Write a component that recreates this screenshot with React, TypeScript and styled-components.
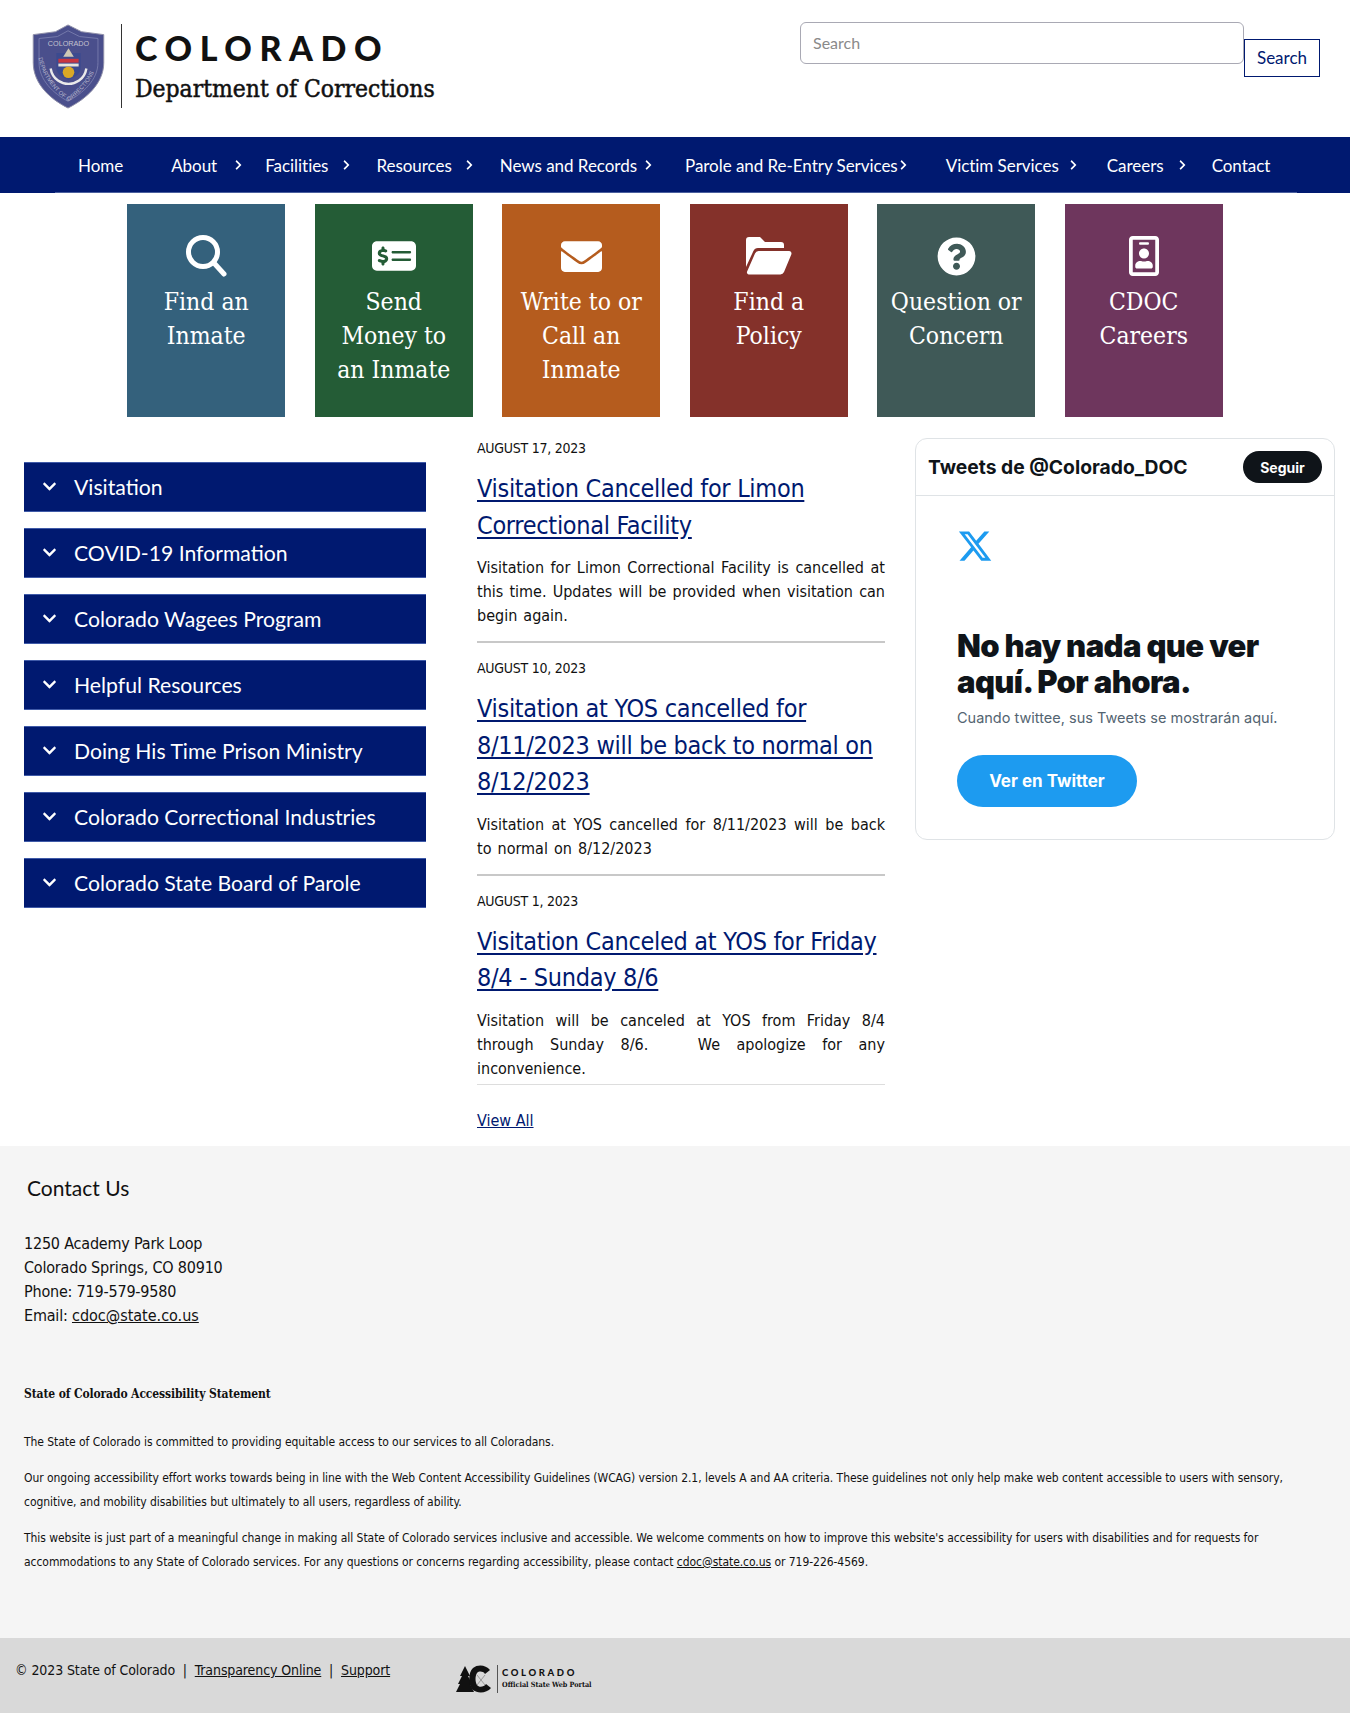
import React from 'react';
import styled, { createGlobalStyle } from 'styled-components';
import { FaChevronDown, FaChevronRight, FaEnvelope, FaQuestionCircle, FaRegIdBadge } from 'react-icons/fa';
import { FaMoneyCheckDollar, FaXTwitter } from 'react-icons/fa6';

const BODY_FONT = `'DejaVu Sans Condensed', 'DejaVu Sans', sans-serif`;
const NAV_FONT = `Lato, 'Open Sans', sans-serif`;
const SLAB_FONT = `'DejaVu Serif Condensed', 'DejaVu Serif', serif`;
const NAVY = '#001970';

const GlobalStyle = createGlobalStyle`
  html, body { margin: 0; padding: 0; background: #fff; }
  body { font-family: ${BODY_FONT}; color: #111; }
  * { box-sizing: border-box; }
`;

const Page = styled.div`
  width: 1350px;
  height: 1713px;
  overflow: hidden;
`;

// Header
const Header = styled.header`
  height: 137px;
  display: flex;
  justify-content: space-between;
  padding: 22px 30px 0 30px;
`;

const Brand = styled.div`
  display: flex;
  align-items: flex-start;
`;

const SealWrap = styled.div`
  display: flex;
  margin-top: 2px;
`;

const Divider = styled.div`
  width: 1px;
  height: 84px;
  background: #333;
  margin: 2px 13px 0 14px;
`;

const BrandText = styled.div`
  display: flex;
  flex-direction: column;
`;

const StateName = styled.div`
  font-family: ${NAV_FONT};
  font-weight: 900;
  font-size: 34px;
  line-height: 40px;
  letter-spacing: 7.6px;
  margin-top: 6px;
  color: #111;
`;

const DeptName = styled.div`
  font-family: ${SLAB_FONT};
  font-weight: 400;
  font-size: 24.4px;
  line-height: 30px;
  margin-top: 6px;
  color: #111;
  -webkit-text-stroke: 0.5px #111;
`;

const SearchForm = styled.form`
  display: flex;
  align-items: flex-start;
`;

const SearchInput = styled.input`
  width: 444px;
  height: 42px;
  border: 1px solid #a9a9b4;
  border-radius: 6px;
  padding: 0 12px 2px;
  font-family: ${NAV_FONT};
  font-size: 16px;
  &::placeholder { color: #8a8a8a; opacity: 1; }
`;

const SearchButton = styled.button`
  width: 76px;
  height: 38px;
  margin-top: 17px;
  background: #fff;
  border: 1px solid ${NAVY};
  color: ${NAVY};
  font-family: ${NAV_FONT};
  font-size: 17px;
  padding: 0 0 2px;
`;

// Nav
const NavBar = styled.nav`
  height: 56px;
  background: ${NAVY};
  display: flex;
  align-items: center;
  gap: 48px;
  padding-left: 78px;
  position: relative;
  &::after {
    content: '';
    position: absolute;
    left: 55px;
    right: 53px;
    bottom: 0;
    height: 1px;
    background: #4a5f9e;
  }
`;

const NavItem = styled.a`
  position: relative;
  color: #fff;
  font-family: ${NAV_FONT};
  font-size: 17px;
  letter-spacing: -0.04px;
  white-space: nowrap;
`;

const NavChevron = styled.span<{ $offset: number }>`
  position: absolute;
  top: 50%;
  left: calc(100% + ${(p) => p.$offset}px);
  transform: translateY(-50%);
  display: flex;
  font-size: 11px;
`;

// Tiles
const Tiles = styled.div`
  display: flex;
  justify-content: center;
  gap: 29.5px;
  padding-top: 11px;
`;

const Tile = styled.a<{ $bg: string }>`
  width: 158px;
  height: 213px;
  background: ${(p) => p.$bg};
  color: #fff;
  display: flex;
  flex-direction: column;
  align-items: center;
  padding-top: 30px;
`;

const TileIcon = styled.div<{ $size: number }>`
  height: 44px;
  display: flex;
  align-items: center;
  justify-content: center;
  font-size: ${(p) => p.$size}px;
`;

const TileLabel = styled.div`
  font-family: ${SLAB_FONT};
  font-size: 24.5px;
  line-height: 34px;
  text-align: center;
  margin-top: 7px;
`;

// Main columns
const Columns = styled.main`
  display: flex;
  align-items: flex-start;
  height: 729px;
`;

const Sidebar = styled.div`
  width: 402px;
  margin: 44.5px 0 0 24px;
  display: flex;
  flex-direction: column;
  gap: 16px;
`;

const AccordionRow = styled.div`
  height: 50px;
  background: ${NAVY};
  border-top: 1px solid #3f5aa8;
  border-bottom: 1px solid #3f5aa8;
  display: flex;
  align-items: center;
  padding-left: 18px;
  gap: 17px;
  color: #fff;
  font-family: ${NAV_FONT};
  font-size: 21.2px;
`;

const RowChevron = styled.span`
  display: flex;
  font-size: 15px;
`;

const NewsColumn = styled.div`
  width: 408px;
  margin: 21px 0 0 51px;
`;

const NewsItem = styled.article<{ $rule?: boolean }>`
  border-bottom: ${(p) => (p.$rule ? '2px solid #c8c8c8' : '1px solid #ddd')};
  padding-bottom: ${(p) => (p.$rule ? '13px' : '3px')};
  margin-bottom: 15px;
`;

const NewsDate = styled.div`
  font-size: 14px;
  line-height: 20px;
  letter-spacing: -0.25px;
  color: #111;
`;

const NewsTitle = styled.a`
  display: block;
  margin-top: 13px;
  font-size: 25px;
  line-height: 36.5px;
  letter-spacing: -0.3px;
  color: ${NAVY};
  text-decoration: underline;
  text-underline-offset: 3px;
`;

const NewsBody = styled.p`
  margin: 12px 0 0;
  font-size: 16px;
  line-height: 24px;
  word-spacing: 1.5px;
  text-align: justify;
  color: #111;
`;

const ViewAll = styled.a`
  display: block;
  margin-top: 24px;
  font-size: 16px;
  line-height: 24px;
  color: ${NAVY};
  text-decoration: underline;
`;

// Twitter embed
const TweetCard = styled.aside`
  width: 420px;
  height: 402px;
  margin: 21px 0 0 30px;
  border: 1px solid #dfe3e6;
  border-radius: 12px;
  font-family: Inter, sans-serif;
`;

const TweetHead = styled.div`
  height: 57px;
  border-bottom: 1px solid #dfe3e6;
  display: flex;
  align-items: center;
  justify-content: space-between;
  padding: 0 12px;
`;

const TweetHeadTitle = styled.div`
  font-size: 19.3px;
  font-weight: 700;
  color: #0f1419;
`;

const FollowButton = styled.div`
  height: 32px;
  width: 79px;
  border-radius: 16px;
  background: #0f1419;
  color: #fff;
  font-size: 14px;
  font-weight: 700;
  display: flex;
  align-items: center;
  justify-content: center;
`;

const TweetBody = styled.div`
  padding: 32px 41px 0;
`;

const XMark = styled.div`
  display: flex;
  font-size: 36px;
  color: #1d9bf0;
`;

const EmptyTitle = styled.div`
  margin-top: 64px;
  font-size: 31px;
  line-height: 36px;
  font-weight: 900;
  color: #0f1419;
  letter-spacing: -0.6px;
`;

const EmptyText = styled.div`
  margin-top: 8px;
  font-size: 14.5px;
  line-height: 20px;
  color: #536471;
`;

const ViewButton = styled.div`
  margin-top: 27px;
  width: 180px;
  height: 52px;
  border-radius: 26px;
  background: #1d9bf0;
  color: #fff;
  font-size: 17px;
  font-weight: 700;
  display: flex;
  align-items: center;
  justify-content: center;
`;

// Footer
const Footer = styled.footer`
  height: 492px;
  background: #f5f5f5;
  padding: 28px 24px 0;
`;

const ContactTitle = styled.div`
  font-family: ${NAV_FONT};
  font-size: 21px;
  line-height: 28px;
  margin-left: 3px;
  color: #111;
`;

const Address = styled.div`
  margin-top: 30px;
  font-size: 16px;
  line-height: 24px;
  letter-spacing: -0.2px;
  a { color: #111; text-decoration: underline; letter-spacing: 0; }
`;

const StatementTitle = styled.div`
  margin-top: 56px;
  font-family: ${SLAB_FONT};
  font-weight: 700;
  font-size: 12px;
  line-height: 20px;
  letter-spacing: -0.12px;
`;

const StatementText = styled.p`
  margin: 12px 0 0;
  font-size: 12px;
  line-height: 24px;
  letter-spacing: -0.05px;
  color: #111;
  a { color: #111; text-decoration: underline; }
  &:first-of-type { margin-top: 26px; }
`;

const BottomBar = styled.div`
  height: 75px;
  background: #d9d9d9;
  display: flex;
  align-items: flex-start;
  padding: 22px 0 0 15px;
`;

const BottomLinks = styled.div`
  font-size: 14px;
  line-height: 20px;
  letter-spacing: -0.1px;
  white-space: pre;
  a { color: #111; text-decoration: underline; }
`;

const PortalLogo = styled.div`
  display: flex;
  align-items: center;
  margin: 4px 0 0 66px;
`;

const PortalDivider = styled.div`
  width: 1px;
  height: 28px;
  background: #555;
  margin: 0 4px 0 3px;
`;

const PortalName = styled.div`
  font-family: ${NAV_FONT};
  font-weight: 900;
  font-size: 9.5px;
  line-height: 12px;
  letter-spacing: 2.6px;
`;

const PortalSub = styled.div`
  font-family: ${SLAB_FONT};
  font-size: 7.2px;
  line-height: 12px;
  font-weight: 700;
`;

const Seal = () => (
  <svg width="77" height="85" viewBox="0 0 77 88">
    <path d="M38 1 L52 8 L75 11 L75 40 C75 62 56 78 38 87 C20 78 2 62 2 40 L2 11 L25 8 Z" fill="#4a4f8c" stroke="#8f8fa8" />
    <path d="M38 7 L50 13 L69 15 L69 40 C69 58 53 72 38 80 C23 72 8 58 8 40 L8 15 L27 13 Z" fill="none" stroke="#7579ab" strokeWidth="1" />
    <defs>
      <path id="sealArc" d="M7 30 C9 54 24 70 38.5 80 C53 70 68 54 70 30" />
    </defs>
    <text x="38.5" y="23" textAnchor="middle" fontSize="7.5" fill="#c4c2cf" fontFamily="Liberation Sans, sans-serif">COLORADO</text>
    <text fontSize="6" fill="#b8b8cc" fontFamily="Liberation Sans, sans-serif">
      <textPath href="#sealArc" startOffset="4%">DEPARTMENT OF CORRECTIONS</textPath>
    </text>
    <path d="M26 30 L51 30 L51 46 C51 52 44 55 38.5 58 C33 55 26 52 26 46 Z" fill="#3b4a8f" />
    <path d="M38.5 25 L44 34 L33 34 Z" fill="#cfc9b5" />
    <rect x="28" y="36" width="21" height="4" fill="#c9353f" />
    <rect x="28" y="41" width="21" height="3" fill="#e8e4da" />
    <circle cx="38.5" cy="50" r="6" fill="#d9a826" />
    <path d="M20 46 C22 58 32 62 38.5 62 C45 62 55 58 57 46" fill="none" stroke="#eaeaea" strokeWidth="2.5" />
  </svg>
);

const SearchGlyph = () => (
  <svg width="42" height="44" viewBox="0 0 42 44" fill="none" stroke="#fff" strokeWidth="5" strokeLinecap="round">
    <circle cx="18" cy="18" r="14.5" />
    <path d="M29 29 L39 40" />
  </svg>
);

const FolderGlyph = () => (
  <svg width="46" height="38" viewBox="0 0 46 38" fill="#fff">
    <path d="M0 3a3 3 0 0 1 3-3h11l5 5h16a3 3 0 0 1 3 3v3H12a5 5 0 0 0-4.6 3L0 30z" />
    <path d="M12.5 14H43a2.5 2.5 0 0 1 2.3 3.4L38 35a4 4 0 0 1-3.6 2.4H3a2 2 0 0 1-1.9-2.8L9 16.5a4 4 0 0 1 3.5-2.5z" />
  </svg>
);

const PortalMark = () => (
  <svg width="38" height="30" viewBox="0 0 38 30">
    <path d="M9 2 L14 12 L12 12 L16 20 L14 20 L18 28 L0 28 L4 20 L2 20 L6 12 L4 12 Z" fill="#111" />
    <path d="M34 6 C30 1 22 0 17 4 C12 8 12 22 17 26 C22 30 31 29 35 24 L30 20 C28 23 23 24 21 21 C19 18 19 12 21 9 C23 7 27 7 29 10 Z" fill="#111" />
    <path d="M21 11 L29 21 M29 11 L21 21" stroke="#999" strokeWidth="1" />
  </svg>
);

const navLinks = [
  { label: 'Home' },
  { label: 'About', offset: 15.5 },
  { label: 'Facilities', offset: 13 },
  { label: 'Resources', offset: 12 },
  { label: 'News and Records', offset: 5.6 },
  { label: 'Parole and Re-Entry Services', offset: 0 },
  { label: 'Victim Services', offset: 9 },
  { label: 'Careers', offset: 13 },
  { label: 'Contact' },
];

const tiles = [
  { bg: '#34617c', size: 44, icon: <SearchGlyph />, label: ['Find an', 'Inmate'] },
  { bg: '#245c36', size: 44, icon: <FaMoneyCheckDollar />, label: ['Send', 'Money to', 'an Inmate'] },
  { bg: '#b55c1e', size: 41, icon: <FaEnvelope />, label: ['Write to or', 'Call an', 'Inmate'] },
  { bg: '#84312a', size: 44, icon: <FolderGlyph />, label: ['Find a', 'Policy'] },
  { bg: '#3f5957', size: 39, icon: <FaQuestionCircle />, label: ['Question or', 'Concern'] },
  { bg: '#6e365d', size: 40, icon: <FaRegIdBadge />, label: ['CDOC', 'Careers'] },
];

const accordions = [
  'Visitation',
  'COVID-19 Information',
  'Colorado Wagees Program',
  'Helpful Resources',
  'Doing His Time Prison Ministry',
  'Colorado Correctional Industries',
  'Colorado State Board of Parole',
];

const news = [
  {
    date: 'AUGUST 17, 2023',
    title: 'Visitation Cancelled for Limon Correctional Facility',
    body: 'Visitation for Limon Correctional Facility is cancelled at this time. Updates will be provided when visitation can begin again.',
    rule: true,
  },
  {
    date: 'AUGUST 10, 2023',
    title: 'Visitation at YOS cancelled for 8/11/2023 will be back to normal on 8/12/2023',
    body: 'Visitation at YOS cancelled for 8/11/2023 will be back to normal on 8/12/2023',
    rule: true,
  },
  {
    date: 'AUGUST 1, 2023',
    title: 'Visitation Canceled at YOS for Friday 8/4 - Sunday 8/6',
    body: 'Visitation will be canceled at YOS from Friday 8/4 through Sunday 8/6.\u00a0 \u00a0We apologize for any inconvenience.',
    rule: false,
  },
];

export default function App(): JSX.Element {
  return (
    <Page>
      <GlobalStyle />
      <Header>
        <Brand>
          <SealWrap>
            <Seal />
          </SealWrap>
          <Divider />
          <BrandText>
            <StateName>COLORADO</StateName>
            <DeptName>Department of Corrections</DeptName>
          </BrandText>
        </Brand>
        <SearchForm>
          <SearchInput placeholder="Search" />
          <SearchButton type="button">Search</SearchButton>
        </SearchForm>
      </Header>

      <NavBar>
        {navLinks.map((link) => (
          <NavItem key={link.label}>
            {link.label}
            {link.offset !== undefined && (
              <NavChevron $offset={link.offset}>
                <FaChevronRight />
              </NavChevron>
            )}
          </NavItem>
        ))}
      </NavBar>

      <Tiles>
        {tiles.map((tile) => (
          <Tile key={tile.label.join(' ')} $bg={tile.bg}>
            <TileIcon $size={tile.size}>{tile.icon}</TileIcon>
            <TileLabel>
              {tile.label.map((line) => (
                <div key={line}>{line}</div>
              ))}
            </TileLabel>
          </Tile>
        ))}
      </Tiles>

      <Columns>
        <Sidebar>
          {accordions.map((item) => (
            <AccordionRow key={item}>
              <RowChevron>
                <FaChevronDown />
              </RowChevron>
              {item}
            </AccordionRow>
          ))}
        </Sidebar>

        <NewsColumn>
          {news.map((item) => (
            <NewsItem key={item.date} $rule={item.rule}>
              <NewsDate>{item.date}</NewsDate>
              <NewsTitle>{item.title}</NewsTitle>
              <NewsBody>{item.body}</NewsBody>
            </NewsItem>
          ))}
          <ViewAll>View All</ViewAll>
        </NewsColumn>

        <TweetCard>
          <TweetHead>
            <TweetHeadTitle>Tweets de @Colorado_DOC</TweetHeadTitle>
            <FollowButton>Seguir</FollowButton>
          </TweetHead>
          <TweetBody>
            <XMark>
              <FaXTwitter />
            </XMark>
            <EmptyTitle>No hay nada que ver aquí. Por ahora.</EmptyTitle>
            <EmptyText>Cuando twittee, sus Tweets se mostrarán aquí.</EmptyText>
            <ViewButton>Ver en Twitter</ViewButton>
          </TweetBody>
        </TweetCard>
      </Columns>

      <Footer>
        <ContactTitle>Contact Us</ContactTitle>
        <Address>
          1250 Academy Park Loop
          <br />
          Colorado Springs, CO 80910
          <br />
          Phone: 719-579-9580
          <br />
          Email: <a>cdoc@state.co.us</a>
        </Address>
        <StatementTitle>State of Colorado Accessibility Statement</StatementTitle>
        <StatementText>The State of Colorado is committed to providing equitable access to our services to all Coloradans.</StatementText>
        <StatementText>
          Our ongoing accessibility effort works towards being in line with the Web Content Accessibility Guidelines (WCAG) version 2.1, levels A and AA criteria. These guidelines not only help make web content accessible to users with sensory, cognitive, and mobility disabilities but ultimately to all users, regardless of ability.
        </StatementText>
        <StatementText>
          This website is just part of a meaningful change in making all State of Colorado services inclusive and accessible. We welcome comments on how to improve this website's accessibility for users with disabilities and for requests for accommodations to any State of Colorado services. For any questions or concerns regarding accessibility, please contact <a>cdoc@state.co.us</a> or 719-226-4569.
        </StatementText>
      </Footer>

      <BottomBar>
        <BottomLinks>
          © 2023 State of Colorado  |  <a>Transparency Online</a>  |  <a>Support</a>
        </BottomLinks>
        <PortalLogo>
          <PortalMark />
          <PortalDivider />
          <div>
            <PortalName>COLORADO</PortalName>
            <PortalSub>Official State Web Portal</PortalSub>
          </div>
        </PortalLogo>
      </BottomBar>
    </Page>
  );
}
